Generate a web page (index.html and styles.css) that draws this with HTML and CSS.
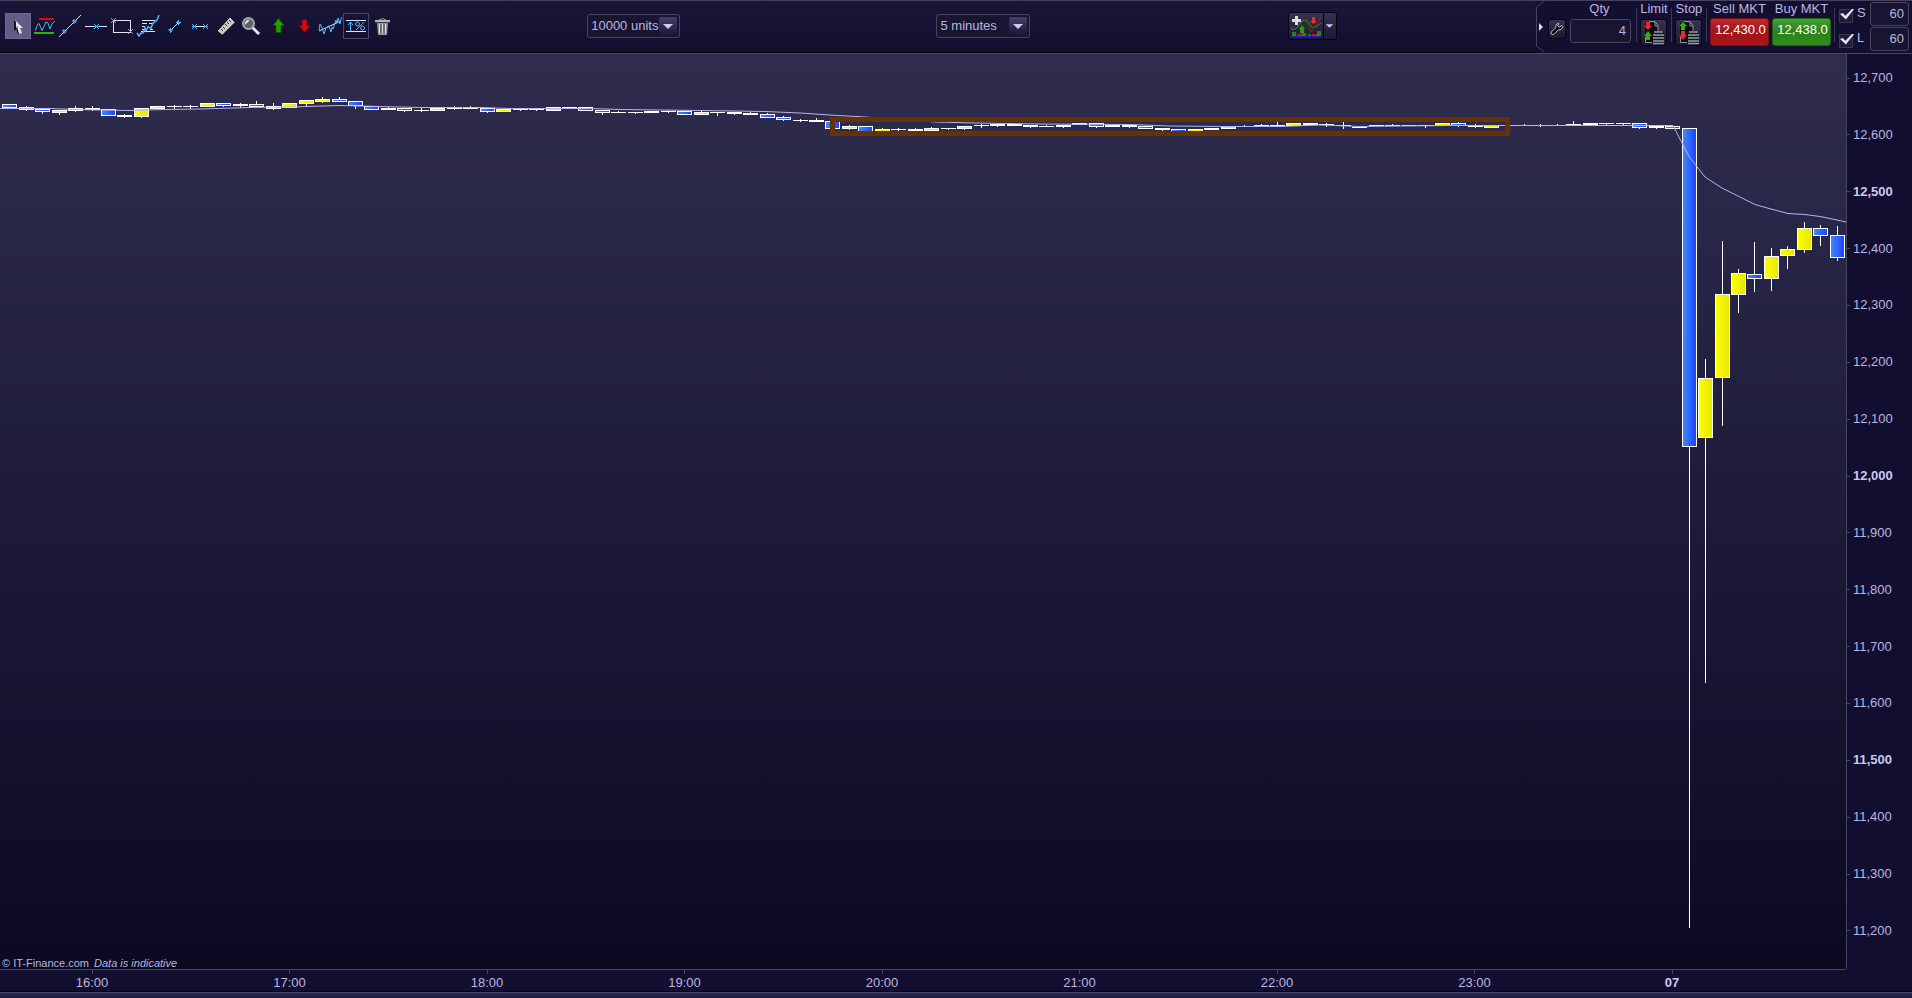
FILE: index.html
```html
<!DOCTYPE html>
<html lang="en">
<head>
<meta charset="utf-8">
<title>5 minutes</title>
<link rel="stylesheet" href="styles.css">
</head>
<body>
<div class="app">
  <header class="toolbar">
    <nav class="tools">
      <button class="tool tool-active" aria-label="Pointer"><svg viewBox="0 0 26 26"><path d="M9 6v12l3-2 2 5 3-1-2-5h3z" fill="#e4e4ea"/><path d="M9 6v12l2-1V9z M12 13l-1 3 2 5 1 0z" fill="#15151c"/></svg></button>
      <button class="tool" aria-label="Support and resistance"><svg viewBox="0 0 26 26"><path d="M8 5h15v2H8z" fill="#f00000"/><path d="M3 19h20v2H3z" fill="#2fb400"/><path class="b" d="M4.500 17.500l2-6 1.500-1 3 7 2-4 2-4.500 2 1 2 6 2-5 3-3"/></svg></button>
      <button class="tool" aria-label="Line"><svg viewBox="0 0 26 26"><path class="w" d="M2 24L24 2"/><path class="b" d="M15 8h5M17 6v5M16 7l3 3M5 18h5M7 16v5M6 17l3 3"/></svg></button>
      <button class="tool" aria-label="Horizontal line"><svg viewBox="0 0 26 26"><path class="w px" d="M2 13.500h22"/><path class="b" d="M11 11l5 5M16 11l-5 5M11 13.500h5"/></svg></button>
      <button class="tool" aria-label="Rectangle"><svg viewBox="0 0 26 26"><path class="w px" d="M4.500 7.500h17v12h-17z"/><path class="b" d="M2 5l5 5M7 5l-5 5M19 16l5 5M24 16l-5 5"/></svg></button>
      <button class="tool" aria-label="Regression"><svg viewBox="0 0 26 26"><path class="w px" d="M7 7.500h13M7 10.500h5M14 10.500h4M7 13.500h3M7 16.500h3M15 16.500h3M6 18.500h14"/><path class="b" stroke-width="1.500" d="M2 20l2 3 2-3h2l2-5 1 3 2-4 3 1 2-5 2-1 2-2 2-5"/></svg></button>
      <button class="tool" aria-label="Segment"><svg viewBox="0 0 26 26"><path class="w" d="M9 18l9-9"/><path class="b" d="M7 17h5M9.500 15v5M8 16l3 3M15 9.500h5M17.500 7v5M16 8l3 3"/></svg></button>
      <button class="tool" aria-label="Horizontal segment"><svg viewBox="0 0 26 26"><path class="w px" d="M7 13.500h12"/><path class="b" d="M5 11l5 5M10 11l-5 5M16 11l5 5M21 11l-5 5M5 13.500h4M17 13.500h4"/></svg></button>
      <button class="tool" aria-label="Ruler"><svg viewBox="0 0 26 26"><path d="M4 18L17 4l5 5L9 22z" fill="#c9c9c6" stroke="#08081a" stroke-width="1"/><path d="M8 16l2 2M10 14l2 2M12 11l2 2M14 9l2 2M16 7l2 2" stroke="#33333c"/><path d="M9 22L22 9" stroke="#74747a"/></svg></button>
      <button class="tool" aria-label="Zoom"><svg viewBox="0 0 26 26"><path d="M13 14l7 7" stroke="#e9e9ee" stroke-width="3"/><circle cx="9.500" cy="10.500" r="5.500" fill="#5a6064" stroke="#a4a8aa" stroke-width="2"/><path d="M6 12a4 4 0 0 1 5-5l-2 2z" fill="#dfe4e6"/></svg></button>
      <button class="tool" aria-label="Up arrow"><svg viewBox="0 0 26 26"><path d="M13.500 5.500L19 12.500h-3v7h-5v-7H8z" fill="#25a000" stroke="#0b5c00"/></svg></button>
      <button class="tool" aria-label="Down arrow"><svg viewBox="0 0 26 26"><path d="M13.500 19.500L19 12.500h-3v-6h-5v6H8z" fill="#d00a12" stroke="#7c0008"/></svg></button>
      <button class="tool" aria-label="Channel"><svg viewBox="0 0 26 26"><path class="w" d="M2 18L24 8"/><path class="b" d="M2 17l1-6 2 4 2 6 2-6 2-2 1 0 2 6 1-5 1 2 3-9 1 3 1-5 2 6 1-5 1-2"/></svg></button>
      <button class="tool tool-framed" aria-label="Percent range"><svg viewBox="0 0 26 26"><path class="w px" d="M3 7.500h20M3 18.500h20"/><path class="b" d="M7.500 18V9M5 12l2.500-3 2.500 3M13 17l8-8"/><circle class="b" cx="14.500" cy="11" r="2"/><circle class="b" cx="19.500" cy="15" r="2"/></svg></button>
      <button class="tool" aria-label="Delete"><svg viewBox="0 0 26 26"><path d="M10 7q3.500-3 7 0" fill="none" stroke="#a5a8ac" stroke-width="1"/><path d="M6 7h15v3H6z" fill="#b6b9bd"/><path d="M6 9h15v1H6z" fill="#3a3c44"/><path d="M8 10h11l-1 12H9z" fill="#8f959a"/><path d="M10.500 11v9M13.500 11v9M16.500 11v9" stroke="#dfe3e6"/><path d="M12 11v9M15 11v9" stroke="#42454d"/></svg></button>
    </nav>
    <div class="pick pick-units">
      <select aria-label="Units"><option>10000 units</option></select>
      <svg class="pick-arrow" viewBox="0 0 18 18"><path d="M4 7h10l-5 5z" fill="#cfcbf2"/></svg>
    </div>
    <div class="pick pick-period">
      <select aria-label="Period"><option>5 minutes</option></select>
      <svg class="pick-arrow" viewBox="0 0 18 18"><path d="M4 7h10l-5 5z" fill="#cfcbf2"/></svg>
    </div>
    <div class="indicators">
      <button class="ind-main" aria-label="Add indicator"><svg viewBox="0 0 34 26"><path d="M2 23.500h30" stroke="#2b20d8"/><path d="M3 19h4v4H3zM13 20h4v3h-4zM19 21h3v2h-3zM28 18h4v5h-4z" fill="#23850c"/><path d="M8 21h5v2H8zM23 21h5v2h-5z" fill="#d0101a"/><path d="M16 8l6 11 3-5-5-6z" fill="#12391a"/><path d="M2 16q5 2 8-4 4-7 8-4 2 2 4 5t5 1l5-4" fill="none" stroke="#2d9a16"/><path d="M2 15q3-2 5 1M12 4q6 3 10 15l5-7q3-3 5-8" fill="none" stroke="#a01420"/><path d="M13 12l3 4h-1v4h-4v-4h-1z" fill="#2a9c10"/><path d="M23 4h3v4h2l-3.500 3-3.500-3h2z" fill="#ef2c34"/><path d="M6 3h3v3h3v3H9v3H6V9H3V6h3z" fill="#dcdce6"/></svg></button>
      <button class="ind-more" aria-label="More indicators"><svg viewBox="0 0 14 26"><path d="M3 11h8l-4 4z" fill="#cfcbf2"/></svg></button>
    </div>
    <section class="trade">
      <svg class="trade-edge" viewBox="0 0 12 52" preserveAspectRatio="none"><path d="M8.500 0L.500 6v39l8 6.500" fill="none" stroke="#45415f"/><path d="M3 22l4 4-4 4z" fill="#dedcf4"/></svg>
      <button class="box wrench" aria-label="Settings"><svg viewBox="0 0 18 18"><path d="M11 2.500Q7 3 7.500 7.500l-5 5v2q2 1.500 3 .5l5-5q4 .5 5-4l-1-1-3 2-1.500-1.500z" fill="#08080f" stroke="#d5d7dc"/></svg></button>
      <div class="col col-qty"><label for="qty">Qty</label><input id="qty" class="field" value="4"></div>
      <i class="sep"></i>
      <div class="col col-small"><label for="limit">Limit</label><button id="limit" class="box order"><svg viewBox="0 0 25 25"><path d="M4 2.500h9l4 4V22H4z" fill="#0a0a10"/><path d="M8 1.500h6l3 4v6M4.500 17v5.500H11" fill="none" stroke="#8d9096"/><path d="M14 2v4h3" fill="none" stroke="#8d9096"/><path d="M12 11h11v13H12z" fill="#12131a"/><path d="M13 12h9M12 15h11M12 18h11M12 21h11M12 23.500h11" stroke="#93a0a5" stroke-width="1.500"/><path d="M5 2h4v4h2l-4 4-4-4h2z" fill="#f0252c"/><path d="M5 20h4v-4h2l-4-5-4 5h2z" fill="#2fb00e"/></svg></button></div>
      <i class="sep"></i>
      <div class="col col-small"><label for="stop">Stop</label><button id="stop" class="box order"><svg viewBox="0 0 25 25"><path d="M4 2.500h9l4 4V22H4z" fill="#0a0a10"/><path d="M8 1.500h6l3 4v6M4.500 17v5.500H11" fill="none" stroke="#8d9096"/><path d="M14 2v4h3" fill="none" stroke="#8d9096"/><path d="M12 11h11v13H12z" fill="#12131a"/><path d="M13 12h9M12 15h11M12 18h11M12 21h11M12 23.500h11" stroke="#93a0a5" stroke-width="1.500"/><path d="M5 10h4V6h2L7 2 3 6h2z" fill="#2fb00e"/><path d="M5 11h4v4h2l-4 5-4-5h2z" fill="#f0252c"/></svg></button></div>
      <i class="sep"></i>
      <div class="col col-deal"><label for="sell">Sell MKT</label><button id="sell" class="deal sell">12,430.0</button></div>
      <div class="col col-deal"><label for="buy">Buy MKT</label><button id="buy" class="deal buy">12,438.0</button></div>
      <i class="sep"></i>
      <div class="limits">
        <div class="limit-row"><input type="checkbox" id="s-on" checked><label for="s-on">S</label><input class="field" value="60" aria-label="S"></div>
        <div class="limit-row"><input type="checkbox" id="l-on" checked><label for="l-on">L</label><input class="field" value="60" aria-label="L"></div>
      </div>
    </section>
  </header>

  <main class="plot">
    <svg id="candles" class="candles" viewBox="0 54 1846 915" preserveAspectRatio="none">
      <defs>
        <linearGradient id="down"><stop offset="0" stop-color="#3f88ff"/><stop offset="1" stop-color="#1f42fa"/></linearGradient>
        <linearGradient id="up"><stop offset="0" stop-color="#ffff00"/><stop offset="1" stop-color="#e6e800"/></linearGradient>
      </defs>
      <g id="bars" shape-rendering="crispEdges"></g>
      <polyline fill="none" stroke="#b9b3ee" stroke-width="1" points="0,108.500 50,108.500 75,109.500 100,110 130,110.500 165,109.500 200,109 250,107.500 290,107 340,105.500 380,106.500 420,107.500 480,107.500 510,108.500 590,108.500 620,109.500 700,110.500 765,111.500 800,113 830,115 856,116.500 900,119 935,122 975,123 1040,124 1130,124.500 1170,126 1225,126.500 1280,126.500 1320,125 1360,126.500 1400,126 1450,125.500 1673,125.500 1689,156.500 1705,177 1722,188 1738,196 1755,204.500 1771,209 1788,213.500 1805,214.500 1820,216.500 1837,220 1846,222"/>
      <rect x="832.500" y="119.500" width="675" height="14" fill="none" stroke="#663300" stroke-width="5"/>
    </svg>
    <p class="credit">© IT-Finance.com <em>Data is indicative</em></p>
  </main>

  <ol class="prices">
    <li>12,700</li><li>12,600</li><li class="major">12,500</li><li>12,400</li><li>12,300</li><li>12,200</li><li>12,100</li><li class="major">12,000</li><li>11,900</li><li>11,800</li><li>11,700</li><li>11,600</li><li class="major">11,500</li><li>11,400</li><li>11,300</li><li>11,200</li>
  </ol>
  <ol class="times">
    <li>16:00</li><li>17:00</li><li>18:00</li><li>19:00</li><li>20:00</li><li>21:00</li><li>22:00</li><li>23:00</li><li class="major">07</li>
  </ol>
  <footer class="strip"></footer>
</div>
<script src="chart.js"></script>
</body>
</html>
```
FILE: chart.js
```js
// Each bar: colour (b falling, y rising, w flat), body top, body bottom, wick top, wick bottom.
const bars = `b 104 108;w 107 110 106 111;b 109 112 109 114;y 110 113 110 115;w 108 111 106 112;w 108 110 106 111;b 109 116;w 115 117 114 118;y 108 117 108 118;y 106 109
w 106 107 105 109;w 106 107 105 109;y 103 107;b 103 106 103 107;w 104 106 103 108;b 104 107 101 107;w 106 109 103 110;y 103 108;y 100 104 100 106;y 99 102 97 103
b 99 102 97 102;b 101 106 101 109;b 106 110;w 108 110 107 110;b 108 111 108 112;w 110 111 108 112;y 108 111;w 108 109 106 110;w 108 109 106 109;b 108 112 108 113
y 109 112;w 109 110 109 111;w 109 110 109 111;y 107 111;w 107 108;b 107 111;b 110 113 110 115;w 112 113 111 113;w 112 113 112 114;w 111 113
w 111 112 110 113;b 111 115;y 112 115 111 115;w 112 113 112 116;w 112 114 112 115;w 113 115 112 115;b 114 118 113 118;b 117 120 116 121;w 120 121 119 122;w 120 122 118 122
b 121 129;y 126 129 125 130;b 126 132;y 129 132 128 132;w 129 130 128 131;w 129 131 128 131;y 128 131 127 131;w 128 129 128 130;y 126 129 126 130;w 125 126 124 128
w 124 126 124 127;w 124 126;w 125 127 125 128;w 126 127 125 127;w 125 127 125 128;w 123 125;b 123 127 123 128;w 125 127;w 125 127 125 128;b 126 129
w 128 130 128 131;b 129 132;y 129 132;w 128 130;y 126 129;w 126 127 125 127;w 125 126 124 126;w 125 126 122 126;y 123 126;w 123 125
w 124 125 123 127;w 125 126 122 129;w 127 128;w 125 126;w 125 126 124 126;w 125 126;w 125 126 125 128;y 123 126;b 123 126 122 127;w 126 127 124 128
y 125 128;w 125 126;w 125 126 124 126;w 125 126 124 127;w 125 126 124 126;w 124 125 121 125;w 123 125;w 123 124 123 125;w 123 124 123 125;b 123 128 123 129
w 126 128 126 129;b 126 129;b 128 447 128 928;y 378 438 359 683;y 294 378 241 426;y 273 295 269 313;b 274 279 242 292;y 256 279 248 291;y 249 256 246 269;y 228 250 222 253
b 228 236 225 246;b 235 258 226 261`.split(/[;\n]/);

const layer = document.getElementById('bars');
function rect(x, y, width, height, fill) {
  const r = document.createElementNS('http://www.w3.org/2000/svg', 'rect');
  Object.entries({ x, y, width, height, fill }).forEach(([k, v]) => r.setAttribute(k, v));
  layer.append(r);
}
bars.forEach((bar, i) => {
  const [kind, ...n] = bar.trim().split(' ');
  const [top, bottom, high = top, low = bottom] = n.map(Number);
  const x = Math.round(2.2 + 16.465 * i);
  rect(x + 7, high, 1, low - high, '#fff');
  rect(x, top, 15, bottom - top, '#fff');
  if (kind !== 'w') rect(x + 1, top + 1, 13, bottom - top - 2, kind === 'b' ? 'url(#down)' : 'url(#up)');
});
```
FILE: styles.css
```css
* { box-sizing: border-box; }
body {
  margin: 0;
  background: #120e2f;
  color: #bbb5e0;
  font: 13px/16px "Liberation Sans", Arial, sans-serif;
}
button, input, select { font: inherit; color: inherit; margin: 0; padding: 0; }
ol, p { margin: 0; padding: 0; list-style: none; }

.app {
  display: grid;
  grid-template: 54px 1fr 22px 7px / 1fr 66px;
  height: 100vh;
  overflow: hidden;
}

/* Toolbar */
.toolbar {
  grid-column: 1 / -1;
  display: grid;
  grid-template-columns: auto 192fr auto 256fr auto 257fr auto 199fr auto;
  padding-left: 5px;
  background: linear-gradient(#1a1637, #130e30);
  border-top: 1px solid #45415f;
  border-bottom: 1px solid #4a4668;
  box-shadow: inset 0 -1px #000;
}
.tools { grid-column: 1; display: flex; padding-top: 12px; }
.tool {
  width: 26px;
  height: 26px;
  border: 0;
  background: none;
}
.tool svg { display: block; width: 26px; height: 26px; }
.tool-active { background: #615d88; box-shadow: inset 0 0 0 1px #6e6a94; }
.tool-framed { box-shadow: inset 0 0 0 1px #4a4668; }
.w { fill: none; stroke: #e2e2f2; }
.b { fill: none; stroke: #4cb8fa; }
.px { shape-rendering: crispEdges; }

.pick { position: relative; margin-top: 13px; height: 24px; }
.pick-units { grid-column: 3; width: 93px; }
.pick-period { grid-column: 5; width: 94px; }
.pick select {
  width: 100%;
  height: 24px;
  padding-left: 3px;
  appearance: none;
  border: 1px solid #48445f;
  border-radius: 3px;
  background: #181530;
}
.pick-arrow {
  position: absolute;
  top: 3px;
  right: 3px;
  width: 18px;
  height: 18px;
  border-radius: 2px;
  background: linear-gradient(#434069, #1b1739);
  pointer-events: none;
}
.indicators {
  grid-column: 7;
  display: flex;
  width: 49px;
  height: 28px;
  margin-top: 11px;
  border: 1px solid #06050f;
  border-radius: 3px;
  background: linear-gradient(#35324f, #1c1936);
}
.indicators button { border: 0; background: none; }
.indicators svg { display: block; height: 26px; }
.ind-main { width: 34px; }
.ind-more { width: 13px; box-shadow: inset 1px 0 #06050f; }
.ind-more svg { width: 13px; }

/* Trading panel */
.trade { grid-column: 9; display: flex; padding-right: 3px; background: #130f31; }
.trade-edge { width: 12px; height: 52px; }
.box {
  border: 1px solid #06050f;
  border-radius: 3px;
  background: linear-gradient(#36334f, #1b1833);
}
.box svg { display: block; }
.wrench { width: 18px; height: 20px; margin-top: 18px; }
.wrench svg { width: 16px; height: 18px; }
.col { display: flex; flex-direction: column; text-align: center; white-space: nowrap; }
.col label { height: 18px; line-height: 15px; }
.col-qty { width: 61px; margin: 0 5px 0 4px; }
.col-qty label { padding-right: 2px; }
.field {
  width: 100%;
  height: 24px;
  padding: 0 4px 1px 0;
  border: 1px solid #48445f;
  border-radius: 3px;
  background: #181530;
  text-align: right;
}
.sep { width: 1px; height: 34px; margin-top: 7px; background: #3b3755; }
.col-small { width: 28px; margin: 0 3px; }
.order { width: 27px; height: 27px; }
.order svg { width: 25px; height: 25px; }
.col-deal { width: 59px; margin-left: 3px; }
.deal {
  height: 28px;
  margin-top: -1px;
  padding: 0 0 5px 2px;
  border-radius: 3px;
  color: #fff;
  white-space: nowrap;
}
.sell { border: 1px solid #7c1018; background: linear-gradient(#bd2a2e, #a0141a 50%, #a9161b); }
.buy { border: 1px solid #1f6414; background: linear-gradient(#45a038, #2a8118 50%, #2f8c1c); }
.col-deal + .sep { margin-left: 3px; }
.limits { display: flex; flex-direction: column; gap: 1px; padding: 1px 0 0 4px; }
.limit-row { display: flex; align-items: center; }
.limit-row label { width: 17px; padding: 0 0 2px 4px; }
.limit-row .field { width: 39px; }
.limit-row input[type="checkbox"] {
  width: 14px;
  height: 14px;
  margin-top: 3px;
  appearance: none;
  border: 1px solid #3a3654;
  background: #1f1c3a;
}
.limit-row input[type="checkbox"]:checked::before {
  content: "";
  display: block;
  width: 14px;
  height: 11px;
  margin-top: -1px;
  background: #e6e4f6;
  clip-path: polygon(0 50%, 20% 42%, 38% 66%, 90% 0, 100% 6%, 42% 100%);
}

/* Chart */
.plot {
  position: relative;
  min-height: 0;
  background: linear-gradient(#2f2c4e, #2a2849 15%, #0d0a24 96%, #0b0920);
}
.candles { display: block; width: 100%; height: 100%; }
.credit {
  position: absolute;
  left: 2px;
  bottom: 0;
  font-size: 11px;
  line-height: 12px;
}
.credit em { margin-left: 2px; }

/* Axes */
.prices {
  display: flex;
  flex-direction: column;
  justify-content: space-between;
  padding: 16px 0 30px;
  border-left: 1px solid #48445f;
}
.prices li { display: flex; align-items: center; gap: 3px; }
.prices li::before { content: ""; width: 3px; height: 1px; background: #48445f; }
.times {
  display: flex;
  justify-content: space-between;
  padding: 0 154px 0 72px;
  border-top: 1px solid #48445f;
}
.times li { width: 40px; text-align: center; }
.times li::before {
  content: "";
  display: block;
  width: 1px;
  height: 4px;
  margin: 0 auto 1px;
  background: #48445f;
}
.major { font-weight: bold; color: #cdc8ee; }
.strip {
  grid-column: 1 / -1;
  border-top: 1px solid #000;
  background: linear-gradient(#4a4668 1px, #2a274c 1px, #1f1c42);
}
```
